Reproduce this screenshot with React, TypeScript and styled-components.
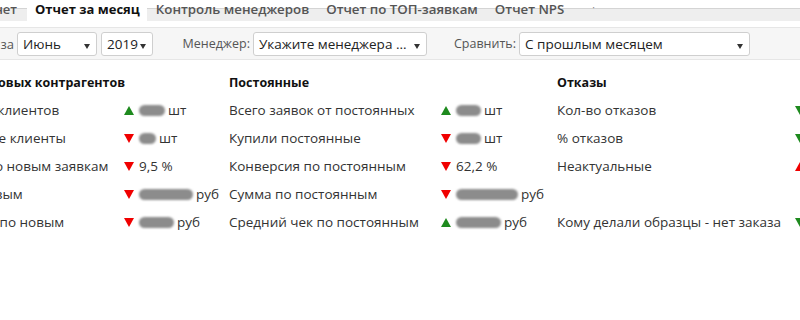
import React from "react";
import styled, { createGlobalStyle } from "styled-components";

const GlobalStyle = createGlobalStyle`
  html, body { margin: 0; padding: 0; background: #fff; }
  body { font-family: "Open Sans", "DejaVu Sans", sans-serif; color: #333; }
`;

const Page = styled.div`
  width: 800px;
  height: 320px;
  overflow: hidden;
  background: #fff;
`;

const TabBar = styled.div`
  display: flex;
  height: 21px;
  background: linear-gradient(to bottom, #fff 0, #fff 8px, #d4d4d4 8px, #d4d4d4 9px, #eeeeee 9px);
`;

/* a tab whose start is cut off by the left edge of the window */
const CutTab = styled.div<{ $w: number }>`
  display: flex;
  justify-content: flex-end;
  width: ${(p) => p.$w}px;
  margin-right: 10px;
  height: 21px;
  line-height: 19px;
  font-size: 13px;
  font-weight: 600;
  color: #555;
  white-space: nowrap;
`;

const Tab = styled.div<{ $active?: boolean }>`
  padding: ${(p) => (p.$active ? "0 7px 0 8px" : "0 8px 0 9px")};
  height: 21px;
  line-height: 19px;
  font-size: ${(p) => (p.$active ? "13px" : "13.3px")};
  font-weight: ${(p) => (p.$active ? 700 : 600)};
  color: ${(p) => (p.$active ? "#111" : "#555")};
  background: ${(p) => (p.$active ? "#fff" : "transparent")};
  white-space: nowrap;
`;

const TabMark = styled.div`
  margin-left: 20px;
  font-size: 10px;
  line-height: 14px;
  color: #888;
`;

const Toolbar = styled.div`
  margin-top: 6px;
  height: 31px;
  display: flex;
  align-items: center;
  background: #f6f6f6;
  border-top: 1px solid #e6e6e6;
  border-bottom: 1px solid #e6e6e6;
  font-size: 12.5px;
  color: #555;
`;

const CutLabel = styled.span<{ $w: number }>`
  display: flex;
  justify-content: flex-end;
  width: ${(p) => p.$w}px;
  margin-right: 3px;
  font-size: 13px;
  white-space: nowrap;
`;

const Label = styled.span<{ $w: number }>`
  box-sizing: border-box;
  width: ${(p) => p.$w}px;
  padding-right: 3px;
  text-align: right;
  white-space: nowrap;
`;

const Select = styled.div<{ $w: number; $ml?: number }>`
  position: relative;
  box-sizing: border-box;
  width: ${(p) => p.$w}px;
  height: 24px;
  margin-left: ${(p) => p.$ml ?? 0}px;
  padding-left: 5px;
  background: #fff;
  border: 1px solid #cfcfcf;
  border-radius: 3px;
  line-height: 22px;
  font-size: 13.5px;
  color: #222;
  white-space: nowrap;
  overflow: hidden;
`;

const Arrow = styled.span`
  position: absolute;
  right: 6px;
  top: 11px;
  width: 0;
  height: 0;
  border-left: 3px solid transparent;
  border-right: 3px solid transparent;
  border-top: 5px solid #333;
`;

const Content = styled.div`
  display: flex;
  padding-top: 8px;
`;

const Section = styled.div<{ $cols: string; $ml?: number }>`
  display: grid;
  grid-template-columns: ${(p) => p.$cols};
  grid-auto-rows: 28px;
  align-items: center;
  margin-left: ${(p) => p.$ml ?? 0}px;
  font-size: 13.5px;
  color: #333;
`;

const Header = styled.div<{ $indent?: number }>`
  grid-column: 1 / -1;
  margin-left: ${(p) => p.$indent ?? 0}px;
  font-weight: 700;
  font-size: 12.5px;
  color: #111;
  height: 24px;
  line-height: 25px;
  white-space: nowrap;
`;

const RowLabel = styled.div`
  white-space: nowrap;
`;

const Value = styled.div`
  display: flex;
  align-items: center;
  white-space: nowrap;
`;

const Tri = styled.span<{ $up: boolean; $color: string }>`
  width: 0;
  height: 0;
  margin-right: 5px;
  border-left: 5px solid transparent;
  border-right: 5px solid transparent;
  ${(p) =>
    p.$up
      ? `border-bottom: 9px solid ${p.$color};`
      : `border-top: 9px solid ${p.$color};`}
`;

const Blob = styled.span<{ $w: number }>`
  display: inline-block;
  width: ${(p) => p.$w}px;
  height: 11px;
  margin-right: 3px;
  border-radius: 6px;
  background: #8c8c8c;
  filter: blur(1.2px);
`;

const GREEN = "#1e8a1e";
const RED = "#f00000";

type Row = {
  label: string;
  dir?: "up" | "down";
  good?: boolean;
  blob?: number;
  text?: string;
  unit?: string;
};

type Sec = { title: string; cols: string; ml?: number; indent?: number; rows: (Row | null)[] };

const sections: Sec[] = [
  {
    title: "Заявки от новых контрагентов",
    cols: "212px 105px",
    ml: -88,
    indent: 9,
    rows: [
      { label: "Всего новых клиентов", dir: "up", good: true, blob: 26, unit: "шт" },
      { label: "Купили новые клиенты", dir: "down", good: false, blob: 17, unit: "шт" },
      { label: "Конверсия по новым заявкам", dir: "down", good: false, text: "9,5 %" },
      { label: "Сумма по новым", dir: "down", good: false, blob: 54, unit: "руб" },
      { label: "Средний чек по новым", dir: "down", good: false, blob: 35, unit: "руб" },
    ],
  },
  {
    title: "Постоянные",
    cols: "212px 116px",
    rows: [
      { label: "Всего заявок от постоянных", dir: "up", good: true, blob: 25, unit: "шт" },
      { label: "Купили постоянные", dir: "down", good: false, blob: 25, unit: "шт" },
      { label: "Конверсия по постоянным", dir: "down", good: false, text: "62,2 %" },
      { label: "Сумма по постоянным", dir: "down", good: false, blob: 62, unit: "руб" },
      { label: "Средний чек по постоянным", dir: "up", good: true, blob: 45, unit: "руб" },
    ],
  },
  {
    title: "Отказы",
    cols: "238px 80px",
    rows: [
      { label: "Кол-во отказов", dir: "down", good: true, blob: 20, unit: "шт" },
      { label: "% отказов", dir: "down", good: true, text: "4,1 %" },
      { label: "Неактуальные", dir: "up", good: false, blob: 20, unit: "шт" },
      null,
      { label: "Кому делали образцы - нет заказа", dir: "down", good: true, blob: 20, unit: "шт" },
    ],
  },
];

const tabs = ["Отчет за месяц", "Контроль менеджеров", "Отчет по ТОП-заявкам", "Отчет NPS"];

export default function App() {
  return (
    <Page>
      <GlobalStyle />
      <TabBar>
        <CutTab $w={17}>Кабинет</CutTab>
        {tabs.map((t, i) => (
          <Tab key={t} $active={i === 0}>
            {t}
          </Tab>
        ))}
        <TabMark>·</TabMark>
      </TabBar>
      <Toolbar>
        <CutLabel $w={14}>Отчет за</CutLabel>
        <Select $w={80}>
          Июнь
          <Arrow />
        </Select>
        <Select $w={52} $ml={4}>
          2019
          <Arrow />
        </Select>
        <Label $w={100}>Менеджер:</Label>
        <Select $w={174}>
          Укажите менеджера ...
          <Arrow />
        </Select>
        <Label $w={92}>Сравнить:</Label>
        <Select $w={231}>
          С прошлым месяцем
          <Arrow />
        </Select>
      </Toolbar>
      <Content>
        {sections.map((s) => (
          <Section key={s.title} $cols={s.cols} $ml={s.ml}>
            <Header $indent={s.indent}>{s.title}</Header>
            {s.rows.map((r, ri) =>
              r ? (
                <React.Fragment key={ri}>
                  <RowLabel>{r.label}</RowLabel>
                  <Value>
                    <Tri $up={r.dir === "up"} $color={r.good ? GREEN : RED} />
                    {r.blob ? <Blob $w={r.blob} /> : null}
                    {r.text ?? r.unit}
                  </Value>
                </React.Fragment>
              ) : (
                <React.Fragment key={ri}>
                  <RowLabel />
                  <Value />
                </React.Fragment>
              )
            )}
          </Section>
        ))}
      </Content>
    </Page>
  );
}
